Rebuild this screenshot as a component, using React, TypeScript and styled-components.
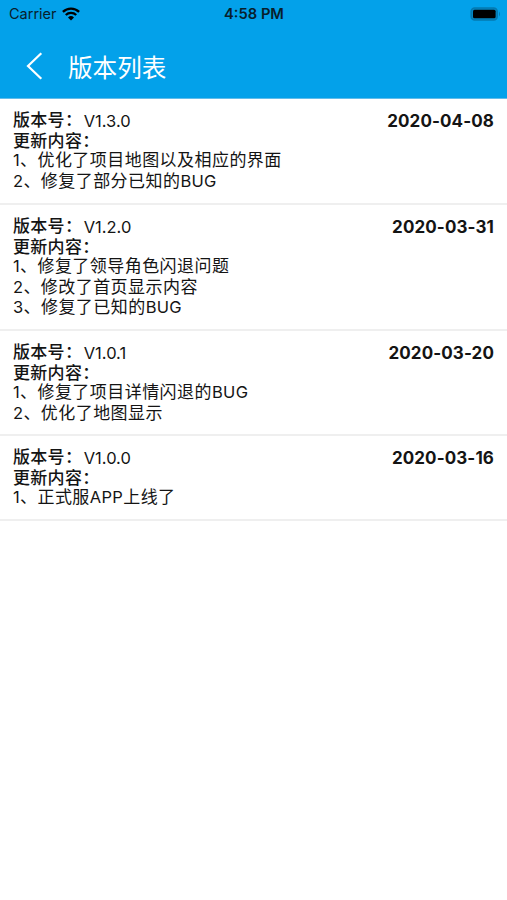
import React from 'react';
import styled, { createGlobalStyle } from 'styled-components';

const Global = createGlobalStyle`
  * { box-sizing: border-box; }
  body { margin: 0; background: #fff; font-family: Inter, "Noto Sans CJK SC", sans-serif; color: #141414; }
`;
const Screen = styled.div`
  width: 507px; height: 900px; overflow: hidden; background: #fff;
`;
const Header = styled.header`
  height: 99px; background: #03a1ea; border-bottom: 1px solid #62bcea;
`;
const StatusBar = styled.div`
  height: 27px; padding: 0 6px 0 9px; display: grid;
  grid-template-columns: 1fr auto 1fr; align-items: center; color: #08202c;
`;
const Carrier = styled.div`
  display: flex; align-items: center; gap: 5px; font-size: 14.5px;
`;
const Clock = styled.div`
  padding-right: 2px; font-size: 14.7px; font-weight: 600;
`;
const Battery = styled.div`
  display: flex; justify-content: flex-end;
`;
const NavBar = styled.div`
  height: 71px; padding: 9px 0 0 26px; display: flex; align-items: center; gap: 25px; color: #fff;
`;
const BackIcon = styled.svg`
  margin-top: -3px;
`;
const Title = styled.h1`
  margin: 0; padding-top: 2px; font-size: 24.6px; font-weight: 400; line-height: 36px;
`;
const Entry = styled.article<{ $height: number }>`
  height: ${p => p.$height}px; padding: 12px 13px 0; border-bottom: 2px solid #efefef;
`;
const Heading = styled.div`
  height: 21px; display: flex; font-size: 16.5px; line-height: 20px;
`;
const Label = styled.div`
  font-size: 17px; letter-spacing: 0.3px; font-weight: 500; line-height: 19px; height: 18px;
`;
const Version = styled.span`
  margin-left: 1.5px;
`;
const ReleaseDate = styled.time`
  margin-left: auto; font-weight: 650; font-size: 17px; letter-spacing: 0.1px;
`;
const Note = styled.div`
  height: 20.5px; font-size: 17px; letter-spacing: 0.45px; line-height: 20.5px; white-space: nowrap;
`;
const Latin = styled.span`
  font-size: 16.5px; letter-spacing: 0.3px;
`;

const releases = [
  { version: 'V1.3.0', date: '2020-04-08', height: 106, notes: ['1、优化了项目地图以及相应的界面', '2、修复了部分已知的BUG'] },
  { version: 'V1.2.0', date: '2020-03-31', height: 126, notes: ['1、修复了领导角色闪退问题', '2、修改了首页显示内容', '3、修复了已知的BUG'] },
  { version: 'V1.0.1', date: '2020-03-20', height: 105, notes: ['1、修复了项目详情闪退的BUG', '2、优化了地图显示'] },
  { version: 'V1.0.0', date: '2020-03-16', height: 85, notes: ['1、正式服APP上线了'] },
];

function MixedText({ text }: { text: string }) {
  return <>{text.split(/([A-Z0-9]+)/).map((part, i) => (i % 2 ? <Latin key={i}>{part}</Latin> : part))}</>;
}

export default function App() {
  return (
    <Screen lang="zh-CN">
      <Global />
      <Header>
        <StatusBar>
          <Carrier>
            Carrier
            <svg width="18" height="14" viewBox="0 0 18 14" fill="none" stroke="#000" strokeWidth="2.3">
              <path d="M.9 4.9a11.5 11.5 0 0 1 16.2 0M3.8 8a7.4 7.4 0 0 1 10.4 0" />
              <path d="M6 10.4a4.4 4.4 0 0 1 6 0L9 13.5z" fill="#000" stroke="none" />
            </svg>
          </Carrier>
          <Clock>4:58 PM</Clock>
          <Battery>
            <svg width="31" height="14" viewBox="0 0 31 14">
              <rect x="1.2" y="1" width="26" height="12" rx="3.5" fill="#0387c4" stroke="#0579b0" strokeWidth="1.6" />
              <rect x="3" y="2.7" width="22.6" height="8.6" rx="1.5" fill="#000" />
              <path d="M29 4.5q2 2.5 0 5z" fill="#0579b0" />
            </svg>
          </Battery>
        </StatusBar>
        <NavBar>
          <BackIcon width="17" height="28" viewBox="0 0 17 28" fill="none" stroke="currentColor" strokeWidth="2.2">
            <path d="M15.3 1.2L2 14l13.3 12.8" />
          </BackIcon>
          <Title>版本列表</Title>
        </NavBar>
      </Header>
      <main>
        {releases.map(r => (
          <Entry key={r.version} $height={r.height}>
            <Heading>
              <Label>版本号：</Label>
              <Version>{r.version}</Version>
              <ReleaseDate>{r.date}</ReleaseDate>
            </Heading>
            <Label>更新内容：</Label>
            {r.notes.map(note => <Note key={note}><MixedText text={note} /></Note>)}
          </Entry>
        ))}
      </main>
    </Screen>
  );
}
